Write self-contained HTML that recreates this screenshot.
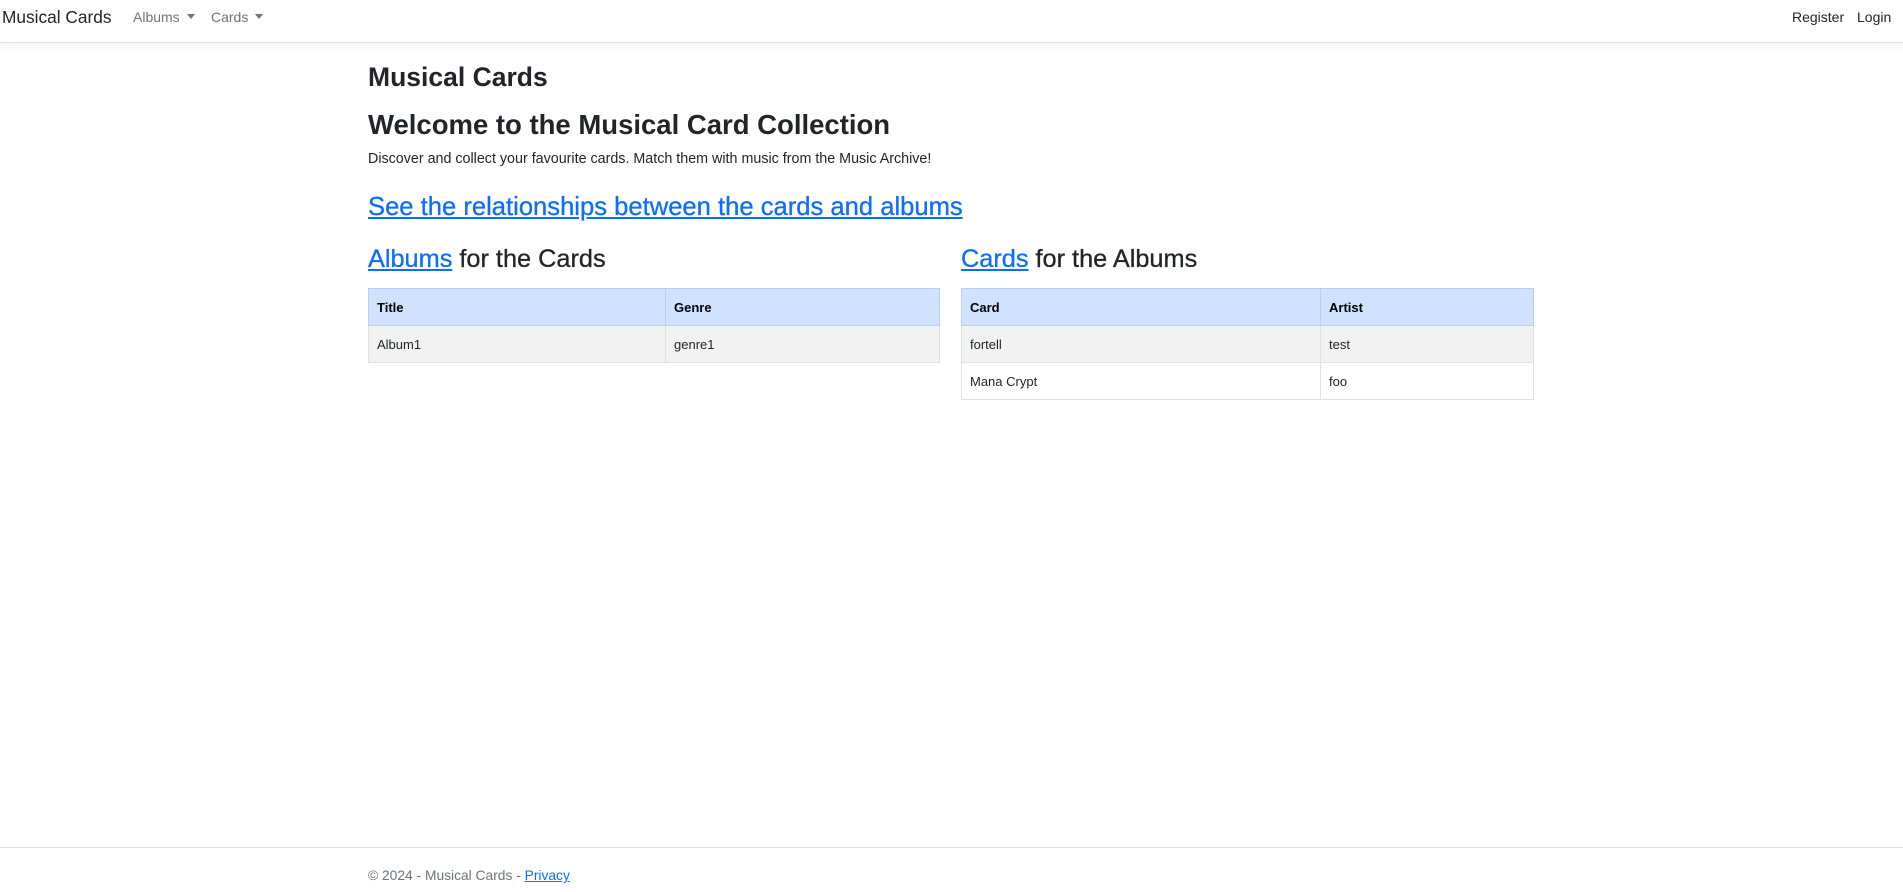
<!DOCTYPE html>
<html><head><meta charset="utf-8"><style>
*{box-sizing:border-box;margin:0;padding:0}
body{width:1903px;height:892px;position:relative;font-family:"Liberation Sans",sans-serif;color:#212529;background:#fff;overflow:hidden}
.nav{position:absolute;left:0;top:0;width:1903px;height:43px;border-bottom:1px solid #dee2e6;box-shadow:0 3px 10px rgba(0,0,0,.05);background:#fff}
.nav span{position:absolute;top:0;line-height:34px;font-size:14px}
.brand{left:2px;font-size:17.3px!important;color:#212529}
.dd{color:#6c757d}
.dd:after{content:"";display:inline-block;margin-left:7px;vertical-align:3px;border-top:5px solid #6c757d;border-left:4.5px solid transparent;border-right:4.5px solid transparent}
.r{color:#212529}
.abs{position:absolute;white-space:nowrap}
a{color:#0d6efd;text-decoration:underline}
table{position:absolute;border-collapse:collapse;font-size:13px}
td,th{border:1px solid #dee2e6;padding:0 8px;height:37px;text-align:left}
th{background:#cfe2ff;border-color:#b6d0f5;font-weight:bold;color:#000}
tr.g td{background:#f2f2f2}
.foot{position:absolute;left:0;top:847px;width:1903px;border-top:1px solid #dee2e6}
.h3{font-size:25.3px;-webkit-text-stroke:0.3px currentColor}
</style></head><body>
<div class="nav">
<span class="brand">Musical Cards</span>
<span class="dd" style="left:133px">Albums</span>
<span class="dd" style="left:211px">Cards</span>
<span class="r" style="left:1792px">Register</span>
<span class="r" style="left:1857px">Login</span>
</div>
<div class="abs" style="left:368px;top:62px;font-size:26.5px;font-weight:bold">Musical Cards</div>
<div class="abs" style="left:368px;top:109px;font-size:27.5px;font-weight:bold">Welcome to the Musical Card Collection</div>
<div class="abs" style="left:368px;top:151px;font-size:14.3px">Discover and collect your favourite cards. Match them with music from the Music Archive!</div>
<div class="abs h3" style="left:368px;top:193px;font-size:25.6px"><a>See the relationships between the cards and albums</a></div>
<div class="abs h3" style="left:368px;top:245px"><a>Albums</a> for the Cards</div>
<div class="abs h3" style="left:961px;top:245px"><a>Cards</a> for the Albums</div>
<table style="left:368px;top:288px;width:572px">
<tr><th style="width:297px">Title</th><th>Genre</th></tr>
<tr class="g"><td>Album1</td><td>genre1</td></tr>
</table>
<table style="left:961px;top:288px;width:573px">
<tr><th style="width:359px">Card</th><th>Artist</th></tr>
<tr class="g"><td>fortell</td><td>test</td></tr>
<tr><td>Mana Crypt</td><td>foo</td></tr>
</table>
<div class="foot"></div>
<div class="abs" style="left:368px;top:868px;font-size:13.8px;color:#6c757d">© 2024 - Musical Cards - <a>Privacy</a></div>
</body></html>
